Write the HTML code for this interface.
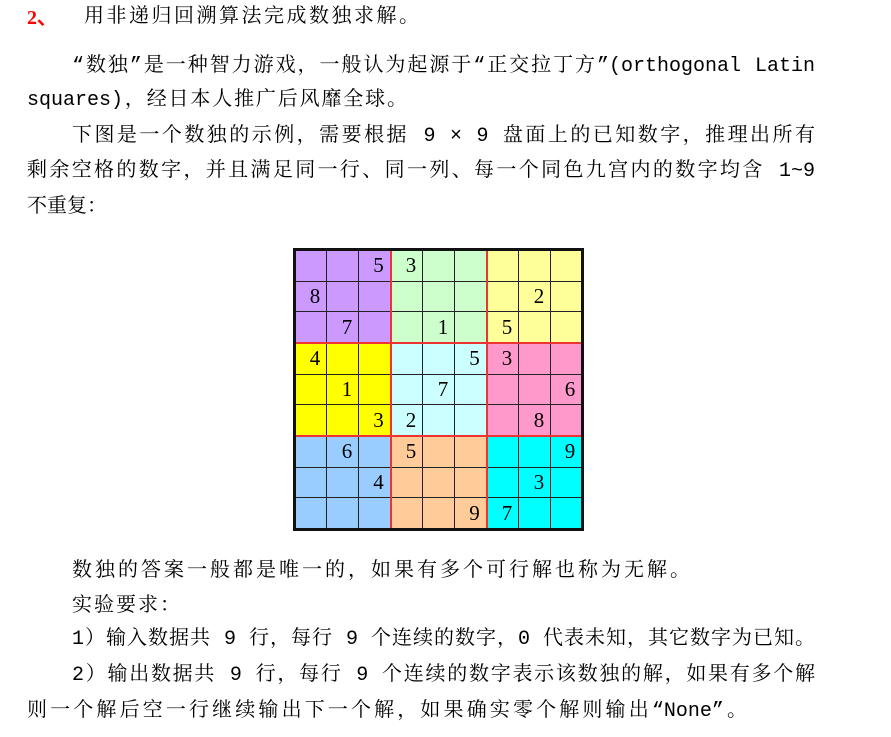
<!DOCTYPE html>
<html><head><meta charset="utf-8"><style>
body{margin:0;width:891px;height:737px;background:#fff;position:relative;overflow:hidden;font-family:"Liberation Mono","Noto Serif CJK SC",serif;color:#000;}
.l{position:absolute;font-size:20px;line-height:24px;white-space:nowrap;text-align:justify;text-align-last:justify;}
table{position:absolute;left:293px;top:248px;width:291px;height:283px;table-layout:fixed;border-collapse:collapse;border:3px solid #111;}
td{border:1.5px solid #222;padding:0;text-align:right;font-family:"Liberation Serif",serif;font-size:21px;vertical-align:middle;}
td span{display:inline-block;width:22px;text-align:center;}
.a{background:#cc99ff}.b{background:#ccffcc}.c{background:#ffff99}.d{background:#ffff00}.e{background:#ccffff}.f{background:#ff99cc}.g{background:#99ccff}.h{background:#ffcc99}.i{background:#00ffff}
.rr{border-right:2px solid #e33}.rb{border-bottom:2px solid #e33}
</style></head><body>
<div class="l" style="left:27px;top:6px;"><span style="color:#f00;font-family:'Liberation Serif',serif;font-weight:bold">2、</span></div>
<div class="l" style="left:84px;top:6px;width:335px;">用非递归回溯算法完成数独求解。</div>
<div class="l" style="left:72px;top:55px;width:743px;">“数独”是一种智力游戏，一般认为起源于“正交拉丁方”(orthogonal Latin</div>
<div class="l" style="left:27px;top:89px;width:380px;">squares)，经日本人推广后风靡全球。</div>
<div class="l" style="left:72px;top:125px;width:743px;">下图是一个数独的示例，需要根据 9 × 9 盘面上的已知数字，推理出所有</div>
<div class="l" style="left:27px;top:160px;width:788px;">剩余空格的数字，并且满足同一行、同一列、每一个同色九宫内的数字均含 1~9</div>
<div class="l" style="left:27px;top:196px;width:78px;">不重复：</div>
<table>
<tr><td class="a"></td><td class="a"></td><td class="a rr"><span>5</span></td><td class="b"><span>3</span></td><td class="b"></td><td class="b rr"></td><td class="c"></td><td class="c"></td><td class="c"></td></tr>
<tr><td class="a"><span>8</span></td><td class="a"></td><td class="a rr"></td><td class="b"></td><td class="b"></td><td class="b rr"></td><td class="c"></td><td class="c"><span>2</span></td><td class="c"></td></tr>
<tr><td class="a rb"></td><td class="a rb"><span>7</span></td><td class="a rr rb"></td><td class="b rb"></td><td class="b rb"><span>1</span></td><td class="b rr rb"></td><td class="c rb"><span>5</span></td><td class="c rb"></td><td class="c rb"></td></tr>
<tr><td class="d"><span>4</span></td><td class="d"></td><td class="d rr"></td><td class="e"></td><td class="e"></td><td class="e rr"><span>5</span></td><td class="f"><span>3</span></td><td class="f"></td><td class="f"></td></tr>
<tr><td class="d"></td><td class="d"><span>1</span></td><td class="d rr"></td><td class="e"></td><td class="e"><span>7</span></td><td class="e rr"></td><td class="f"></td><td class="f"></td><td class="f"><span>6</span></td></tr>
<tr><td class="d rb"></td><td class="d rb"></td><td class="d rr rb"><span>3</span></td><td class="e rb"><span>2</span></td><td class="e rb"></td><td class="e rr rb"></td><td class="f rb"></td><td class="f rb"><span>8</span></td><td class="f rb"></td></tr>
<tr><td class="g"></td><td class="g"><span>6</span></td><td class="g rr"></td><td class="h"><span>5</span></td><td class="h"></td><td class="h rr"></td><td class="i"></td><td class="i"></td><td class="i"><span>9</span></td></tr>
<tr><td class="g"></td><td class="g"></td><td class="g rr"><span>4</span></td><td class="h"></td><td class="h"></td><td class="h rr"></td><td class="i"></td><td class="i"><span>3</span></td><td class="i"></td></tr>
<tr><td class="g"></td><td class="g"></td><td class="g rr"></td><td class="h"></td><td class="h"></td><td class="h rr"><span>9</span></td><td class="i"><span>7</span></td><td class="i"></td><td class="i"></td></tr>
</table>
<div class="l" style="left:72px;top:560px;width:618px;">数独的答案一般都是唯一的，如果有多个可行解也称为无解。</div>
<div class="l" style="left:72px;top:595px;width:108px;">实验要求：</div>
<div class="l" style="left:72px;top:628px;width:743px;">1）输入数据共 9 行，每行 9 个连续的数字，0 代表未知，其它数字为已知。</div>
<div class="l" style="left:72px;top:664px;width:743px;">2）输出数据共 9 行，每行 9 个连续的数字表示该数独的解，如果有多个解</div>
<div class="l" style="left:27px;top:700px;width:720px;">则一个解后空一行继续输出下一个解，如果确实零个解则输出“None”。</div>
</body></html>
